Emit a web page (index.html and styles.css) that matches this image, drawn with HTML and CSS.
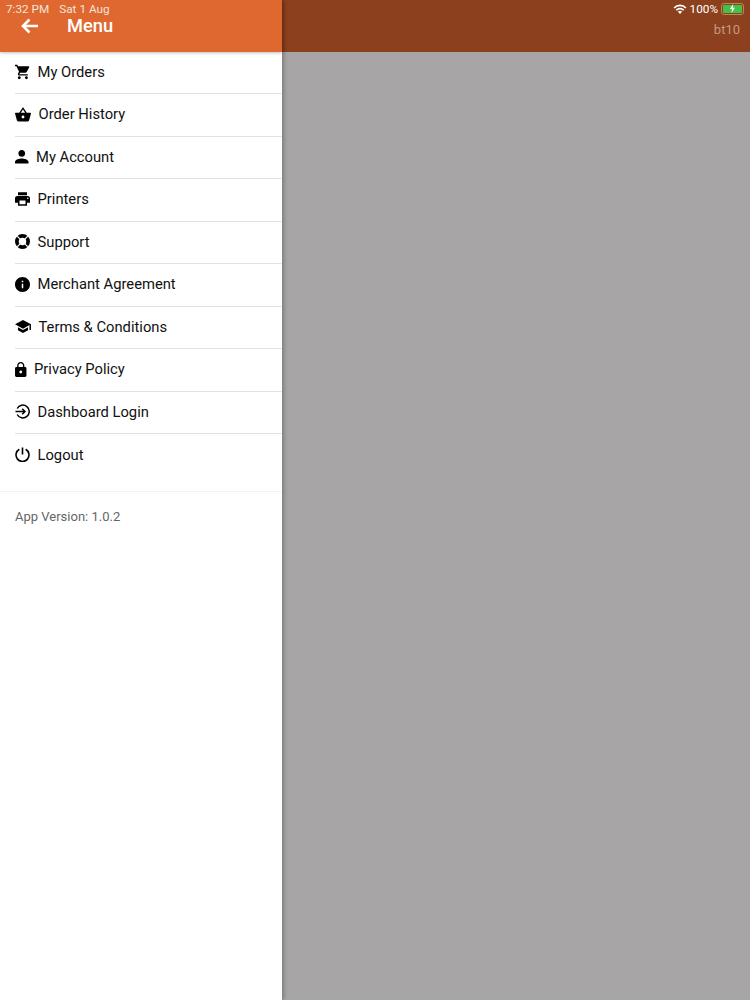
FILE: index.html
```html
<!DOCTYPE html>
<html lang="en">
<head>
  <meta charset="UTF-8" />
  <title>Menu</title>
  <link rel="stylesheet" href="styles.css">
</head>
<body>
  <div class="screen">
    <div class="drawer">
      <div class="drawer-header">
        <svg class="back-icon" width="18" height="18" viewBox="0 0 18 18"><path d="M8.500 2.500L2 9l6.500 6.500M2.500 9H17" fill="none" stroke="#fff" stroke-width="2.600"/></svg>
        <span class="drawer-title">Menu</span>
      </div>
      <ul class="menu">
        <li class="menu-item">
          <svg width="15" height="16" viewBox="1 2 21 20"><path d="M7 18c-1.100 0-1.990.9-1.990 2S5.900 22 7 22s2-.9 2-2-.9-2-2-2zM1 2v2h2l3.600 7.590-1.350 2.450c-.16.28-.25.61-.25.96 0 1.100.9 2 2 2h12v-2H7.420c-.14 0-.25-.11-.25-.25l.03-.12.9-1.630h7.450c.75 0 1.410-.41 1.750-1.030l3.580-6.490c.08-.14.12-.31.12-.48 0-.55-.45-1-1-1H5.210l-.94-2H1zm16 16c-1.100 0-1.990.9-1.990 2s.89 2 1.990 2 2-.9 2-2-.9-2-2-2z"/></svg>
          <span>My Orders</span>
        </li>
        <li class="menu-item">
          <svg width="16" height="15" viewBox="1 2 22 19"><path d="M17.210 9l-4.380-6.560c-.19-.28-.51-.42-.83-.42-.32 0-.64.14-.83.43L6.790 9H2c-.55 0-1 .45-1 1 0 .09.01.18.04.27l2.540 9.270c.23.84 1 1.460 1.920 1.460h13c.92 0 1.690-.62 1.930-1.460l2.540-9.270L23 10c0-.55-.45-1-1-1h-4.790zM9 9l3-4.400L15 9H9zm3 8c-1.100 0-2-.9-2-2s.9-2 2-2 2 .9 2 2-.9 2-2 2z"/></svg>
          <span>Order History</span>
        </li>
        <li class="menu-item">
          <svg width="13.500" height="13.500" viewBox="4 4 16 16"><path d="M12 12c2.210 0 4-1.790 4-4s-1.790-4-4-4-4 1.790-4 4 1.790 4 4 4zm0 2c-2.670 0-8 1.340-8 4v2h16v-2c0-2.660-5.330-4-8-4z"/></svg>
          <span>My Account</span>
        </li>
        <li class="menu-item">
          <svg width="15" height="14" viewBox="2 3 20 18"><path d="M19 8H5c-1.660 0-3 1.340-3 3v6h4v4h12v-4h4v-6c0-1.660-1.340-3-3-3zm-3 11H8v-5h8v5zm3-7c-.55 0-1-.45-1-1s.45-1 1-1 1 .45 1 1-.45 1-1 1zm-1-9H6v4h12V3z"/></svg>
          <span>Printers</span>
        </li>
        <li class="menu-item">
          <svg width="15" height="15" viewBox="0 0 20 20"><circle cx="10" cy="10" r="7.500" fill="none" stroke="#000" stroke-width="5"/><path d="M3 3l3.500 3.500M17 3l-3.500 3.500M3 17l3.500-3.500M17 17l-3.500-3.500" stroke="#fff" stroke-width="1.500"/></svg>
          <span>Support</span>
        </li>
        <li class="menu-item">
          <svg width="15" height="15" viewBox="2 2 20 20"><path d="M12 2C6.480 2 2 6.480 2 12s4.480 10 10 10 10-4.480 10-10S17.520 2 12 2zm1 15h-2v-6h2v6zm0-8h-2V7h2v2z"/></svg>
          <span>Merchant Agreement</span>
        </li>
        <li class="menu-item">
          <svg width="16" height="13" viewBox="1 3 22 18"><path d="M5 13.180v4L12 21l7-3.820v-4L12 17l-7-3.820zM12 3L1 9l11 6 9-4.910V17h2V9L12 3z"/></svg>
          <span>Terms &amp; Conditions</span>
        </li>
        <li class="menu-item">
          <svg width="11.500" height="15" viewBox="4 1 16 21"><path d="M18 8h-1V6c0-2.760-2.240-5-5-5S7 3.240 7 6v2H6c-1.100 0-2 .9-2 2v10c0 1.100.9 2 2 2h12c1.100 0 2-.9 2-2V10c0-1.100-.9-2-2-2zm-6 9c-1.100 0-2-.9-2-2s.9-2 2-2 2 .9 2 2-.9 2-2 2zm3.100-9H8.900V6c0-1.710 1.390-3.100 3.100-3.100 1.710 0 3.100 1.390 3.100 3.100v2z"/></svg>
          <span>Privacy Policy</span>
        </li>
        <li class="menu-item">
          <svg width="15" height="15" viewBox="0 0 15 15" fill="none" stroke="#000" stroke-width="1.500"><path d="M2.200 4.500A6.400 6.400 0 1 1 2.200 10.500"/><path d="M0.500 7.500H10M7.200 4.700L10 7.500L7.200 10.300"/></svg>
          <span>Dashboard Login</span>
        </li>
        <li class="menu-item">
          <svg width="15" height="15" viewBox="0 0 15 15" fill="none" stroke="#000" stroke-width="1.600"><path d="M4.300 2.300A6.500 6.500 0 1 0 10.700 2.300"/><path d="M7.500 0.500V7.500"/></svg>
          <span>Logout</span>
        </li>
      </ul>
      <div class="version">App Version: 1.0.2</div>
    </div>
    <div class="backdrop">
      <div class="backdrop-bar">bt10</div>
    </div>
  </div>

  <div class="status-bar">
    <span class="status-time">7:32 PM</span>
    <span class="status-date">Sat 1 Aug</span>
    <span class="status-right">
      <svg width="14" height="10" viewBox="0 0 14 10"><path d="M0.500 3.400A9 9 0 0 1 13.500 3.400L12.300 4.600A7.300 7.300 0 0 0 1.700 4.600zM2.700 5.600A6 6 0 0 1 11.300 5.600L10.100 6.800A4.300 4.300 0 0 0 3.900 6.800zM4.900 7.800A3 3 0 0 1 9.100 7.800L7 10z" fill="#fff"/></svg>
      <span>100%</span>
      <span class="battery"><span class="battery-level"><svg width="7" height="9" viewBox="0 0 7 9"><path d="M4.200 0L0.800 5H3L2.500 9L6 3.800H3.800z" fill="#fff"/></svg></span></span>
    </span>
  </div>
</body>
</html>
```

FILE: styles.css
```css
* {
  box-sizing: border-box;
}

html, body {
  margin: 0;
  padding: 0;
  height: 100%;
}

body {
  font-family: Roboto, "Liberation Sans", sans-serif;
  overflow: hidden;
}

.screen {
  display: flex;
  height: 1000px;
  background-color: #a7a5a6;
}

.drawer {
  width: 282px;
  background-color: #fff;
  box-shadow: 2px 0 4px rgba(0, 0, 0, 0.25);
  position: relative;
  z-index: 1;
}

.drawer-header {
  height: 52px;
  background-color: #df6831;
  box-shadow: 0 1px 3px rgba(0, 0, 0, 0.25);
  color: #fff;
  display: flex;
  align-items: flex-start;
  padding: 17px 0 0 21px;
}

.back-icon {
  flex-shrink: 0;
}

.drawer-title {
  font-size: 18.250px;
  font-weight: 500;
  line-height: 18px;
  margin-left: 28px;
}

.menu {
  list-style: none;
  margin: -0.250px 0 0;
  padding: 0 0 0 15px;
}

.menu-item {
  display: flex;
  align-items: center;
  gap: 7.500px;
  height: 42.500px;
  padding-bottom: 1.500px;
  border-bottom: 1px solid #e2e2e2;
  font-size: 14.750px;
  color: #111;
}

.menu-item:last-child {
  border-bottom: none;
}

.version {
  margin-top: 14px;
  border-top: 1px solid #f2f2f2;
  padding: 17px 15px 0;
  font-size: 13px;
  line-height: 16px;
  color: #666;
}

.backdrop {
  flex: 1;
}

.backdrop-bar {
  height: 52px;
  background-color: #8c401e;
  color: #c49a84;
  font-size: 13px;
  text-align: right;
  padding: 22px 10px 0 0;
  line-height: 15px;
}

.status-bar {
  position: absolute;
  top: 2px;
  left: 6px;
  right: 6px;
  z-index: 2;
  display: flex;
  align-items: center;
  height: 13px;
  font-size: 11.750px;
  color: #f6e3d8;
}

.status-date {
  margin-left: 10px;
}

.status-right {
  margin-left: auto;
  display: flex;
  align-items: center;
  gap: 3px;
  color: #fff;
}

.battery {
  width: 23px;
  height: 12px;
  border: 1px solid #b98a50;
  border-radius: 3px;
  padding: 1px;
  display: flex;
}

.battery-level {
  flex: 1;
  background-color: #41c24b;
  border-radius: 1px;
  display: flex;
  justify-content: center;
  align-items: center;
}
```
